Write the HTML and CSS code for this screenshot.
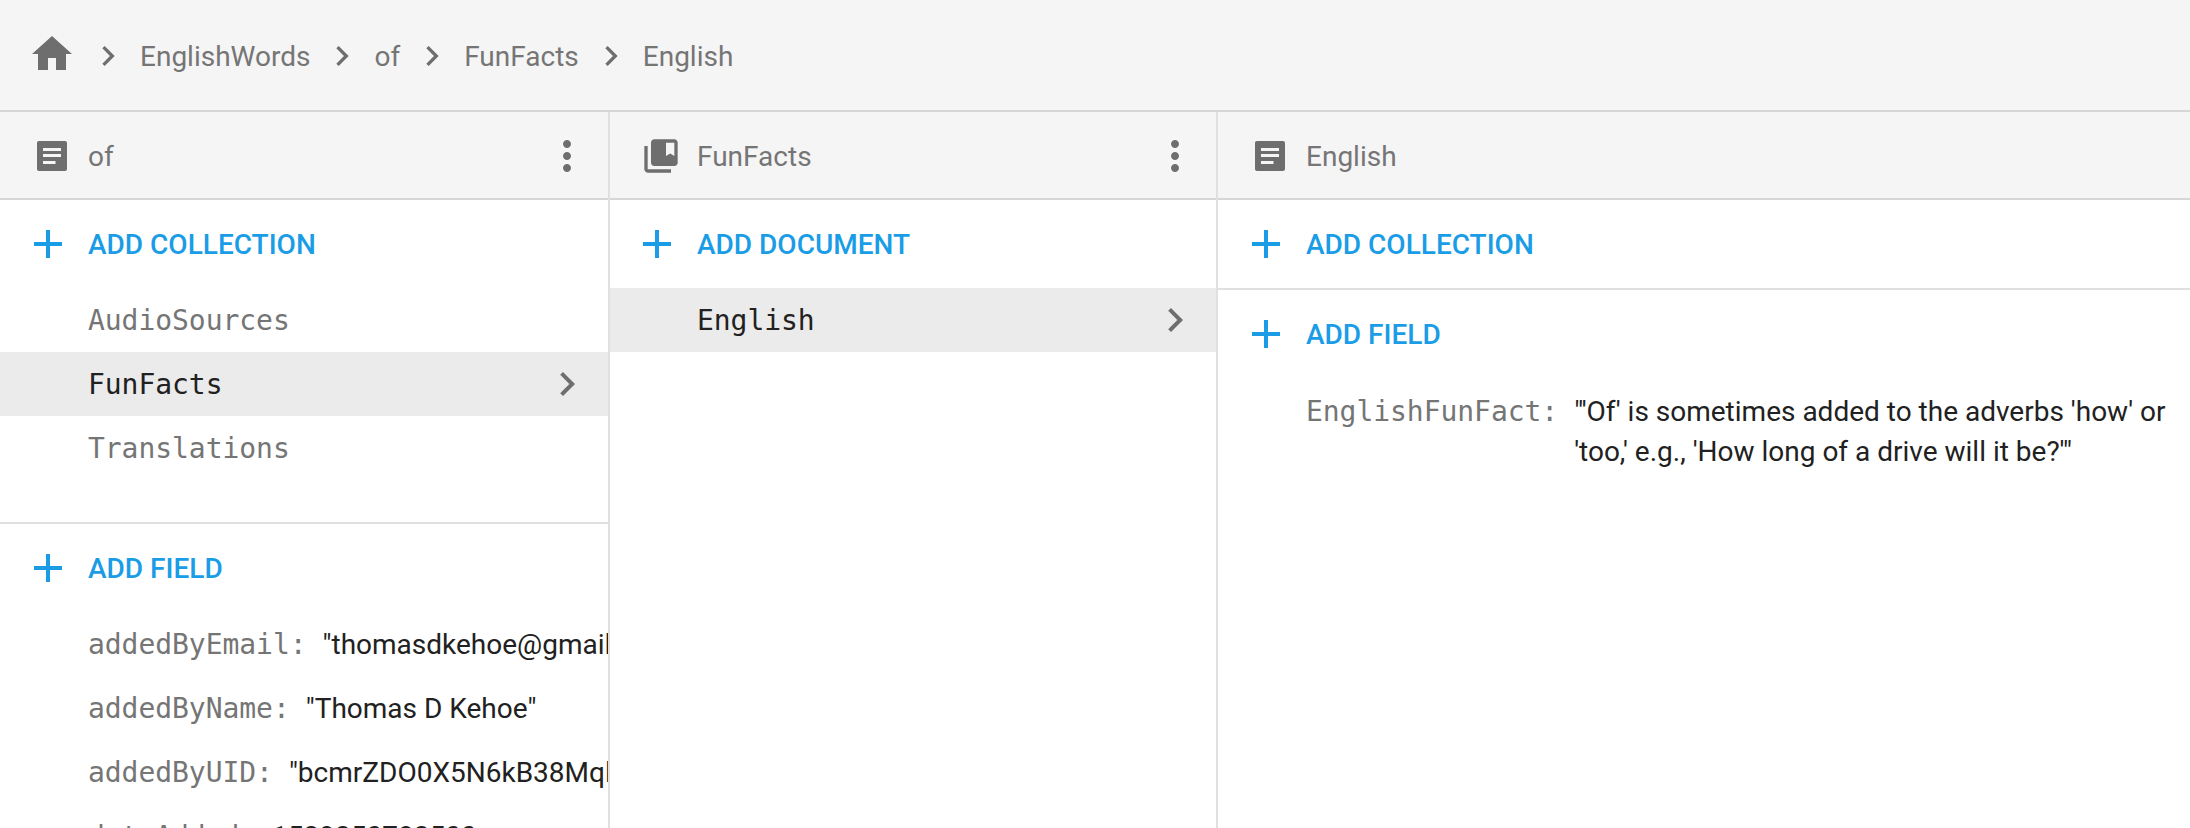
FILE: index.html
```html
<!DOCTYPE html>
<html lang="en">

<head>
    <meta charset="UTF-8">
    <meta name="viewport" content="width=device-width, initial-scale=1.0">
    <title>Database</title>
    <link rel="stylesheet" href="styles.css">
</head>

<body>

    <!-- Icons used more than once -->
    <svg class="icon-defs" width="0" height="0">
        <defs>
            <symbol id="i-chevron" viewBox="0 0 24 24">
                <path d="M10 6L8.59 7.41 13.17 12l-4.58 4.59L10 18l6-6z" />
            </symbol>
            <symbol id="i-plus" viewBox="0 0 24 24">
                <path d="M19 13h-6v6h-2v-6H5v-2h6V5h2v6h6v2z" />
            </symbol>
            <symbol id="i-more" viewBox="0 0 24 24">
                <path d="M12 8c1.1 0 2-.9 2-2s-.9-2-2-2-2 .9-2 2 .9 2 2 2zm0 2c-1.1 0-2 .9-2 2s.9 2 2 2 2-.9 2-2-.9-2-2-2zm0 6c-1.1 0-2 .9-2 2s.9 2 2 2 2-.9 2-2-.9-2-2-2z" />
            </symbol>
            <symbol id="i-doc" viewBox="0 0 24 24">
                <path fill-rule="evenodd" d="M5.500 4.500h13c.6 0 1 .4 1 1v13c0 .6-.4 1-1 1h-13c-.6 0-1-.4-1-1v-13c0-.6.4-1 1-1zM7.500 8v1.500h9V8zm0 3v1.500h9V11zm0 3.500V16h6.250v-1.500z" />
            </symbol>
            <symbol id="i-collection" viewBox="-2.4 -2.4 28.8 28.8">
                <path d="M4 6H2v14c0 1.100.9 2 2 2h14v-2H4V6zm16-4H8c-1.100 0-2 .9-2 2v12c0 1.100.9 2 2 2h12c1.100 0 2-.9 2-2V4c0-1.100-.9-2-2-2zm0 10l-2.500-1.500L15 12V4h5v8z" />
            </symbol>
        </defs>
    </svg>

    <!-- Breadcrumb bar -->
    <nav class="crumbs">
        <svg class="icon icon-home" viewBox="0 0 24 24">
            <path d="M10 20v-6h4v6h5v-8h3L12 3 2 12h3v8z" />
        </svg>
        <svg class="icon icon-chevron"><use href="#i-chevron" /></svg>
        <span>EnglishWords</span>
        <svg class="icon icon-chevron"><use href="#i-chevron" /></svg>
        <span>of</span>
        <svg class="icon icon-chevron"><use href="#i-chevron" /></svg>
        <span>FunFacts</span>
        <svg class="icon icon-chevron"><use href="#i-chevron" /></svg>
        <span>English</span>
    </nav>

    <main class="panels">

        <!-- Document: of -->
        <section class="panel panel-first">
            <header class="panel-head">
                <svg class="icon icon-head"><use href="#i-doc" /></svg>
                <span class="panel-title">of</span>
                <svg class="icon icon-more"><use href="#i-more" /></svg>
            </header>
            <div class="add-row">
                <svg class="icon icon-plus"><use href="#i-plus" /></svg>
                <span>ADD COLLECTION</span>
            </div>
            <ul class="item-list item-list-gap">
                <li>AudioSources</li>
                <li class="selected">FunFacts
                    <svg class="icon icon-row"><use href="#i-chevron" /></svg>
                </li>
                <li>Translations</li>
            </ul>
            <div class="add-row add-row-ruled">
                <svg class="icon icon-plus"><use href="#i-plus" /></svg>
                <span>ADD FIELD</span>
            </div>
            <div class="fields">
                <div class="field"><span class="field-key">addedByEmail:</span><span class="field-value">"thomasdkehoe@gmail.com"</span></div>
                <div class="field"><span class="field-key">addedByName:</span><span class="field-value">"Thomas D Kehoe"</span></div>
                <div class="field"><span class="field-key">addedByUID:</span><span class="field-value">"bcmrZDO0X5N6kB38Mql2"</span></div>
                <div class="field"><span class="field-key">dateAdded:</span><span class="field-value">1529350783500</span></div>
            </div>
        </section>

        <!-- Collection: FunFacts -->
        <section class="panel panel-middle">
            <header class="panel-head">
                <svg class="icon icon-head"><use href="#i-collection" /></svg>
                <span class="panel-title">FunFacts</span>
                <svg class="icon icon-more"><use href="#i-more" /></svg>
            </header>
            <div class="add-row">
                <svg class="icon icon-plus"><use href="#i-plus" /></svg>
                <span>ADD DOCUMENT</span>
            </div>
            <ul class="item-list">
                <li class="selected">English
                    <svg class="icon icon-row"><use href="#i-chevron" /></svg>
                </li>
            </ul>
        </section>

        <!-- Document: English -->
        <section class="panel panel-last">
            <header class="panel-head">
                <svg class="icon icon-head"><use href="#i-doc" /></svg>
                <span class="panel-title">English</span>
            </header>
            <div class="add-row">
                <svg class="icon icon-plus"><use href="#i-plus" /></svg>
                <span>ADD COLLECTION</span>
            </div>
            <div class="add-row add-row-ruled">
                <svg class="icon icon-plus"><use href="#i-plus" /></svg>
                <span>ADD FIELD</span>
            </div>
            <div class="fields">
                <div class="field field-wrap"><span class="field-key">EnglishFunFact:</span><span class="field-value">"'Of' is sometimes added to the adverbs 'how' or 'too,' e.g., 'How long of a drive will it be?'"</span></div>
            </div>
        </section>

    </main>

</body>

</html>
```
FILE: styles.css
```css
/* General Styling */
html,
body {
    height: 100%;
}

body {
    margin: 0;
    overflow: hidden;
    display: flex;
    flex-direction: column;
    background-color: white;
    color: #212121;
    font-family: Roboto, 'Liberation Sans', sans-serif;
    font-size: 28px;
}

.icon-defs {
    position: absolute;
}

.icon {
    flex: none;
    fill: #6e6e6e;
}

/* Breadcrumb bar */
.crumbs {
    flex: none;
    box-sizing: border-box;
    height: 112px;
    padding: 2px 0 0 28px;
    display: flex;
    align-items: center;
    gap: 12px;
    background-color: #f5f5f5;
    border-bottom: 2px solid #d6d6d6;
    color: #757575;
}

.icon-home {
    width: 48px;
    height: 48px;
    margin-top: -4px;
}

.icon-chevron {
    width: 40px;
    height: 40px;
}

/* Panels */
.panels {
    flex: 1;
    min-height: 0;
    display: flex;
}

.panel {
    --edge: 0px;
    flex: none;
    width: 609px;
    box-sizing: border-box;
    overflow: hidden;
}

/* The dividers are 2px and sit across the panel boundary */
.panel-first {
    border-right: 1px solid #e0e0e0;
}

.panel-middle {
    --edge: 1px;
    border-left: 1px solid #e0e0e0;
    border-right: 2px solid #e0e0e0;
}

.panel-last {
    flex: 1;
    width: auto;
}

.panel-head {
    box-sizing: border-box;
    height: 88px;
    padding: 2px 17px 0 calc(28px - var(--edge));
    display: flex;
    align-items: center;
    gap: 12px;
    background-color: #f5f5f5;
    border-bottom: 2px solid #d6d6d6;
    color: #757575;
}

.icon-head {
    width: 48px;
    height: 48px;
}

.panel-title {
    flex: 1;
}

.icon-more {
    width: 48px;
    height: 48px;
}

/* Add buttons */
.add-row {
    height: 88px;
    padding-left: calc(24px - var(--edge));
    display: flex;
    align-items: center;
    gap: 16px;
    color: #1a9de6;
    font-weight: 500;
}

.add-row-ruled {
    border-top: 2px solid #e0e0e0;
}

.icon-plus {
    width: 48px;
    height: 48px;
    fill: #1a9de6;
}

/* Collection and document lists */
.item-list {
    list-style-type: none;
    margin: 0;
    padding: 0;
    font-family: 'DejaVu Sans Mono', monospace;
    letter-spacing: -0.05px;
    color: #757575;
}

.item-list-gap {
    padding-bottom: 42px;
}

.item-list li {
    box-sizing: border-box;
    height: 64px;
    padding: 0 17px 0 calc(88px - var(--edge));
    display: flex;
    align-items: center;
    justify-content: space-between;
}

.item-list .selected {
    background-color: #ebebeb;
    color: #212121;
}

.icon-row {
    width: 48px;
    height: 48px;
}

/* Fields */
.fields {
    padding-left: 88px;
}

.field {
    min-height: 64px;
    display: flex;
    align-items: center;
    gap: 16px;
    white-space: nowrap;
}

.field-wrap {
    align-items: flex-start;
    padding-top: 14px;
    white-space: normal;
}

.field-key {
    flex: none;
    font-family: 'DejaVu Sans Mono', monospace;
    letter-spacing: -0.05px;
    color: #757575;
}

.field-wrap .field-key,
.field-wrap .field-value {
    line-height: 40px;
}
```
